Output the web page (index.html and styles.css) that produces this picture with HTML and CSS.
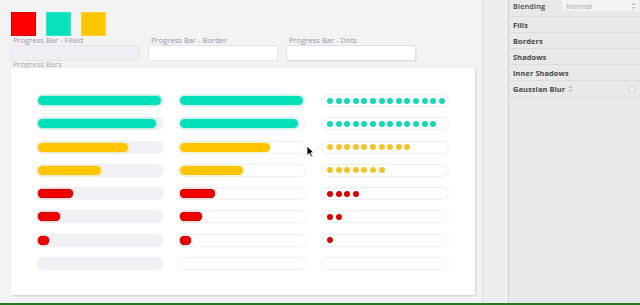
FILE: index.html
```html
<!DOCTYPE html>
<html>
<head>
<meta charset="utf-8">
<link rel="stylesheet" href="styles.css">
</head>
<body>
<div class="app">
  <main class="canvas">
    <div class="swatches">
      <div class="swatch red"></div>
      <div class="swatch teal"></div>
      <div class="swatch yellow"></div>
    </div>
    <div class="fields">
      <div class="field">
        <div class="label">Progress Bar - Filled</div>
        <div class="box box-filled"></div>
      </div>
      <div class="field">
        <div class="label">Progress Bar - Border</div>
        <div class="box box-border"></div>
      </div>
      <div class="field">
        <div class="label">Progress Bar - Dots</div>
        <div class="box box-dots"></div>
      </div>
    </div>
    <div class="label section-label">Progress Bars</div>
    <div class="card">
      <div class="grid">
        <div class="track t-filled"><div class="fill teal" style="width:123px"></div></div>
        <div class="track t-border"><div class="fill teal" style="width:123px"></div></div>
        <div class="track t-dots"><span class="dot teal"></span><span class="dot teal"></span><span class="dot teal"></span><span class="dot teal"></span><span class="dot teal"></span><span class="dot teal"></span><span class="dot teal"></span><span class="dot teal"></span><span class="dot teal"></span><span class="dot teal"></span><span class="dot teal"></span><span class="dot teal"></span><span class="dot teal"></span><span class="dot teal"></span></div>

        <div class="track t-filled"><div class="fill teal" style="width:118px"></div></div>
        <div class="track t-border"><div class="fill teal" style="width:118px"></div></div>
        <div class="track t-dots"><span class="dot teal"></span><span class="dot teal"></span><span class="dot teal"></span><span class="dot teal"></span><span class="dot teal"></span><span class="dot teal"></span><span class="dot teal"></span><span class="dot teal"></span><span class="dot teal"></span><span class="dot teal"></span><span class="dot teal"></span><span class="dot teal"></span><span class="dot teal"></span></div>

        <div class="track t-filled"><div class="fill yellow" style="width:90px"></div></div>
        <div class="track t-border"><div class="fill yellow" style="width:90px"></div></div>
        <div class="track t-dots"><span class="dot yellow"></span><span class="dot yellow"></span><span class="dot yellow"></span><span class="dot yellow"></span><span class="dot yellow"></span><span class="dot yellow"></span><span class="dot yellow"></span><span class="dot yellow"></span><span class="dot yellow"></span><span class="dot yellow"></span></div>

        <div class="track t-filled"><div class="fill yellow" style="width:63px"></div></div>
        <div class="track t-border"><div class="fill yellow" style="width:63px"></div></div>
        <div class="track t-dots"><span class="dot yellow"></span><span class="dot yellow"></span><span class="dot yellow"></span><span class="dot yellow"></span><span class="dot yellow"></span><span class="dot yellow"></span><span class="dot yellow"></span></div>

        <div class="track t-filled"><div class="fill red" style="width:35px"></div></div>
        <div class="track t-border"><div class="fill red" style="width:35px"></div></div>
        <div class="track t-dots"><span class="dot red"></span><span class="dot red"></span><span class="dot red"></span><span class="dot red"></span></div>

        <div class="track t-filled"><div class="fill red" style="width:22px"></div></div>
        <div class="track t-border"><div class="fill red" style="width:22px"></div></div>
        <div class="track t-dots"><span class="dot red"></span><span class="dot red"></span></div>

        <div class="track t-filled"><div class="fill red" style="width:11px"></div></div>
        <div class="track t-border"><div class="fill red" style="width:11px"></div></div>
        <div class="track t-dots"><span class="dot red"></span></div>

        <div class="track t-filled"></div>
        <div class="track t-border"></div>
        <div class="track t-dots"></div>
      </div>
      <svg class="cursor" width="9" height="13" viewBox="0 0 9 13"><path d="M1 1 L1 10.5 L3.3 8.4 L5 12 L6.6 11.3 L4.9 7.8 L8 7.8 Z" fill="#000" stroke="#fff" stroke-width="0.9" stroke-linejoin="round"/></svg>
    </div>
  </main>
  <div class="strip"></div>
  <aside class="panel">
    <div class="prow first">
      <span class="ptitle">Blending</span>
      <div class="select"><span>Normal</span><svg class="chev" width="5" height="8" viewBox="0 0 5 8"><path d="M1 3 L2.5 1.5 L4 3 M1 5 L2.5 6.5 L4 5" fill="none" stroke="#8a8a8a" stroke-width="0.8"/></svg></div>
    </div>
    <div class="prow"><span class="ptitle">Fills</span></div>
    <div class="prow"><span class="ptitle">Borders</span></div>
    <div class="prow"><span class="ptitle">Shadows</span></div>
    <div class="prow"><span class="ptitle">Inner Shadows</span></div>
    <div class="prow last"><span class="ptitle">Gaussian Blur</span><svg class="updown" width="5" height="8" viewBox="0 0 5 8"><path d="M1 3 L2.5 1.5 L4 3 M1 5 L2.5 6.5 L4 5" fill="none" stroke="#8a8a8a" stroke-width="0.8"/></svg><span class="check"></span></div>
  </aside>
</div>
<div class="bottom-line"></div>
</body>
</html>
```

FILE: styles.css
```css
* { box-sizing: border-box; }
html, body { margin: 0; padding: 0; }
body {
  width: 640px;
  height: 305px;
  overflow: hidden;
  font-family: "Open Sans", "Lato", sans-serif;
  background: #f2f2f2;
}
.app {
  display: flex;
  height: 303px;
}
.canvas {
  position: relative;
  width: 482px;
  background: #f3f3f3;
  padding: 12px 0 0 11px;
}
.swatches {
  display: flex;
  gap: 10px;
}
.swatch {
  width: 25px;
  height: 24px;
}
.swatch.red { background: #ff0000; box-shadow: inset 0 0 0 1px #d40000; }
.swatch.teal { background: #08e2bc; box-shadow: inset 0 0 0 1px #2fe8c8; }
.swatch.yellow { background: #ffc700; box-shadow: inset 0 0 0 1px #ffd23a; }

.fields {
  display: flex;
  gap: 10px;
  margin-top: -1px;
}
.field { width: 128px; }
.label {
  font-size: 7.6px;
  line-height: 10px;
  color: #9d8fae;
  padding-left: 2px;
  white-space: nowrap;
}
.box {
  height: 14px;
  margin-top: 1px;
  border-radius: 1px;
}
.box-filled { background: #eeeef3; box-shadow: 0 0 0 1px #e6e6ec; }
.box-border { background: #fff; box-shadow: 0 0 0 1px #e4e4e8; }
.box-dots { background: #fff; box-shadow: 0 0 0 1px #e0e0e4, 1px 1px 2px rgba(0,0,0,0.18); }

.section-label {
  margin-top: -1px;
  color: #a8a8a8;
}
.card {
  position: relative;
  width: 464px;
  height: 227px;
  margin-top: -1px;
  background: #fff;
  box-shadow: 0 0 1px rgba(0,0,0,0.15), 1px 1px 2px rgba(0,0,0,0.12);
  padding: 26px 0 0 25px;
}
.grid {
  display: grid;
  grid-template-columns: 128px 128px 129px;
  column-gap: 14px;
  row-gap: 10.3px;
}
.grid > .t-dots { margin-left: 1px; }
.track {
  height: 13px;
  border-radius: 7px;
  display: flex;
  align-items: center;
}
.t-filled {
  background: #f0f0f5;
  padding: 0 2px;
}
.t-border {
  background: #fff;
  border: 1px solid #f0f0f3;
  padding: 0 1px;
}
.t-dots {
  background: #fff;
  border: 1px solid #efeff2;
  padding: 0 0 0 5px;
  gap: 2.6px;
}
.fill {
  height: 9px;
  border-radius: 5px;
}
.fill.teal { background: #02e0b8; box-shadow: 0 0 0 1.5px rgba(2,224,184,0.18); }
.fill.yellow { background: #ffc600; box-shadow: 0 0 0 1.5px rgba(255,198,0,0.18); }
.fill.red { background: #f20000; box-shadow: inset 0 0 0 1px #c60000, 0 0 0 1.5px rgba(255,0,0,0.12); }
.dot {
  width: 6px;
  height: 6px;
  border-radius: 50%;
  flex: none;
}
.dot.teal { background: #13d9b4; }
.dot.yellow { background: #f5c42a; }
.dot.red { background: #d80000; }

.cursor {
  position: absolute;
  left: 295px;
  top: 77px;
}

.strip {
  width: 27px;
  background: #eeeeee;
  border-left: 1px solid #dadada;
  border-right: 1px solid #cfcfcf;
}
.panel {
  width: 131px;
  background: #e9e9e9;
  font-size: 7.4px;
  color: #464646;
}
.prow {
  height: 16px;
  display: flex;
  align-items: center;
  padding-left: 4px;
  border-bottom: 1px solid #dcdcdc;
}
.prow.first { height: 17px; align-items: flex-start; }
.prow.last { border-bottom: 1px dashed #dedede; }
.ptitle { font-weight: 700; letter-spacing: 0.1px; }
.prow.first .ptitle { font-weight: 600; margin-top: 1px; }
.select {
  margin-left: 17px;
  width: 77px;
  height: 11px;
  background: #f3f3f3;
  border-radius: 1px;
  display: flex;
  justify-content: space-between;
  align-items: center;
  padding: 0 3px 0 4px;
  color: #a5a5a5;
  font-weight: 400;
}
.chev { display: block; }
.updown {
  margin-left: 3px;
  display: block;
}
.check {
  margin-left: auto;
  margin-right: 5px;
  width: 6px;
  height: 6px;
  border: 1px solid #d2d2d2;
  background: #f4f4f4;
  border-radius: 1px;
}
.bottom-line {
  height: 2px;
  background: #237a23;
}
```
